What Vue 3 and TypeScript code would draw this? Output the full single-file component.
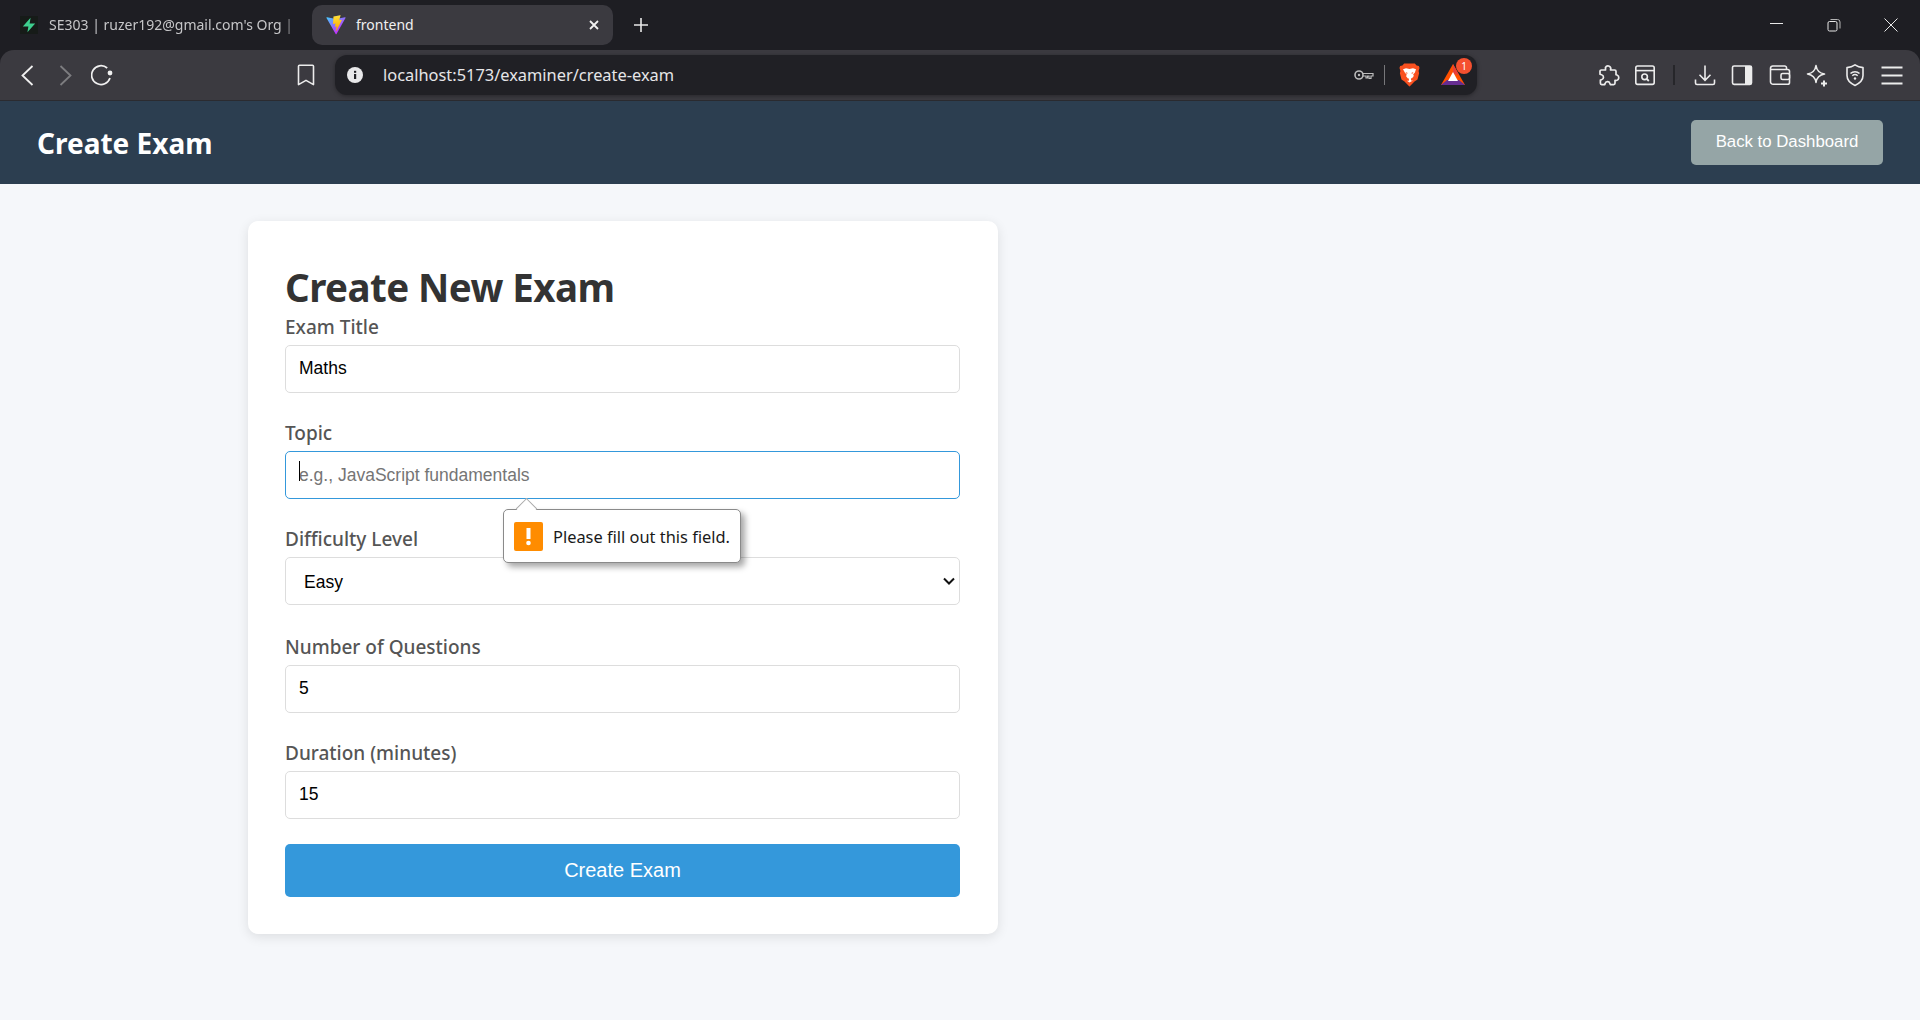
<script setup lang="ts">
import { reactive } from "vue";

const form = reactive({
  title: "Maths",
  topic: "",
  difficulty: "easy",
  questions: 5,
  duration: 15,
});
</script>

<template>
  <div class="browser">
    <div class="chrome">
      <div class="tabstrip">
        <div class="tab">
          <span class="supa-icon">
            <svg viewBox="0 0 18 18" width="18" height="18">
              <path d="M10.6 1.800 2.800 10.500h5.600l-1 5.700 7.800-8.700H9.600z" fill="#3ecf8e" />
            </svg>
          </span>
          <span class="tab-title">SE303 | ruzer192@gmail.com's Org | S</span>
        </div>
        <div class="tab active">
          <svg class="vite-icon" viewBox="0 0 410 404" width="20" height="20">
            <defs>
              <linearGradient id="viteA" x1="6" y1="33" x2="235" y2="344" gradientUnits="userSpaceOnUse">
                <stop offset="0" stop-color="#41d1ff" />
                <stop offset="1" stop-color="#bd34fe" />
              </linearGradient>
              <linearGradient id="viteB" x1="194" y1="8" x2="236" y2="292" gradientUnits="userSpaceOnUse">
                <stop offset="0" stop-color="#ffea83" />
                <stop offset=".08" stop-color="#ffdd35" />
                <stop offset="1" stop-color="#ffa800" />
              </linearGradient>
            </defs>
            <path fill="url(#viteA)" d="M399.641 59.5246L215.643 388.545C211.844 395.338 202.084 395.378 198.228 388.618L10.5817 59.5563C6.38087 52.1896 12.6802 43.2665 21.0281 44.7586L205.223 77.6824C206.398 77.8924 207.601 77.8904 208.776 77.6763L389.119 44.8058C397.439 43.2894 403.768 52.1434 399.641 59.5246Z" />
            <path fill="url(#viteB)" d="M292.965 1.5744L156.801 28.2552C154.563 28.6937 152.906 30.5903 152.771 32.8664L144.395 174.33C144.198 177.662 147.258 180.248 150.51 179.498L188.42 170.749C191.967 169.931 195.172 173.055 194.443 176.622L183.18 231.775C182.422 235.487 185.907 238.661 189.532 237.56L212.947 230.446C216.577 229.344 220.065 232.527 219.297 236.242L201.398 322.875C200.278 328.294 207.486 331.249 210.492 326.603L212.5 323.5L323.454 102.072C325.312 98.3645 322.108 94.137 318.036 94.9228L279.014 102.454C275.347 103.161 272.227 99.746 273.262 96.1583L298.731 7.86689C299.767 4.27314 296.636 0.855181 292.965 1.5744Z" />
          </svg>
          <span class="tab-name">frontend</span>
          <svg class="tab-close" viewBox="0 0 12 12" width="12" height="12">
            <path d="M2 2l8 8M10 2l-8 8" stroke="#f2f2f2" stroke-width="1.8" fill="none" />
          </svg>
        </div>
        <svg class="new-tab" viewBox="0 0 14 14" width="14" height="14">
          <path d="M7 0v14M0 7h14" stroke="#e8e8e8" stroke-width="1.6" fill="none" />
        </svg>
        <div class="win-controls">
          <svg viewBox="0 0 14 14" width="14" height="14"><path d="M0 5.500h13" stroke="#e8e8e8" fill="none" /></svg>
          <svg viewBox="0 0 14 14" width="14" height="14">
            <rect x="1" y="3.500" width="9" height="9.500" rx="1.500" stroke="#e8e8e8" fill="none" />
            <path d="M3.500 1.500h7a2.500 2.500 0 0 1 2.500 2.500v6.500" stroke="#b5b5b5" fill="none" />
          </svg>
          <svg viewBox="0 0 14 14" width="14" height="14"><path d="M.5.5l13 13M13.500.5l-13 13" stroke="#e8e8e8" fill="none" /></svg>
        </div>
      </div>

      <div class="toolbar">
        <div class="nav-btns">
          <svg viewBox="0 0 24 24" width="24" height="24"><path d="M17.500 3 7.500 12.500l10 9.500" stroke="#f0f0f0" stroke-width="1.800" fill="none" /></svg>
          <svg viewBox="0 0 24 24" width="24" height="24"><path d="M7.500 3l10 9.500-10 9.500" stroke="#7d7d80" stroke-width="1.800" fill="none" /></svg>
          <svg viewBox="0 0 24 24" width="24" height="24">
            <path d="M16.200 5A9.400 9.400 0 1 0 19 15" stroke="#f0f0f0" stroke-width="1.700" fill="none" />
            <circle cx="19" cy="10" r="2.400" fill="#f0f0f0" />
          </svg>
        </div>
        <svg class="bookmark" viewBox="0 0 24 24" width="24" height="24">
          <path d="M5.500 2.200h13a1 1 0 0 1 1 1v18.400l-7.500-4.200-7.500 4.200V3.200a1 1 0 0 1 1-1z" stroke="#ececec" stroke-width="1.600" fill="none" stroke-linejoin="round" />
        </svg>
        <div class="urlbar">
          <svg class="info" viewBox="0 0 16 16" width="16" height="16">
            <circle cx="8" cy="8" r="8" fill="#e8e8ea" />
            <rect x="7" y="7" width="2.200" height="5" fill="#202025" />
            <rect x="7" y="3.800" width="2.200" height="2" fill="#202025" />
          </svg>
          <span class="url">localhost:5173/examiner/create-exam</span>
          <svg class="key" viewBox="0 0 20 12" width="20" height="12">
            <circle cx="5" cy="6" r="4" stroke="#bcbcbc" stroke-width="1.600" fill="none" />
            <circle cx="5" cy="6" r="1.200" fill="#bcbcbc" />
            <path d="M9 4.500h10v2.500h-2v2.500h-2V7h-1.500v2H12V7H9" stroke="#bcbcbc" stroke-width="1.200" fill="none" />
          </svg>
          <span class="url-sep"></span>
          <svg class="brave" viewBox="0 0 21 24" width="21" height="24">
            <path d="M5.200.5h10.600l1.800 2 2.300.4.6 2-.9 3.200.5 2.200-1.600 6.100-3 2.200-4.900 4.900-.1.1-.1-.1-4.900-4.900-3-2.200L.9 10.300l.5-2.200-.9-3.200.6-2 2.300-.4z" fill="#f9501f" />
            <path d="M4 6.200l3-1 3.500.8 3.500-.8 3 1-1.200 3.500-1.600 1.500.6 1.800-1.800 2.200-1 .1v2.200h2L10.500 19.500 7.900 17.800h2v-2.200l-1-.1-1.800-2.200.6-1.800-1.600-1.500z" fill="#fff" />
            <path d="M6.500 9l2.200.9-.8 1zM14.500 9l-2.200.9.8 1z" fill="#f9501f" />
          </svg>
          <span class="bat">
            <svg viewBox="0 0 24 22" width="24" height="22">
              <path d="M12 0 0 21h24z" fill="#ff5000" />
              <path d="M12 0 18 11l-6-1z" fill="#e8403a" />
              <path d="M0 21h24l-6-5H6z" fill="#662d91" />
              <path d="M12 8l5 9H7z" fill="#fff" />
            </svg>
            <span class="bat-badge">1</span>
          </span>
        </div>
        <div class="tools">
          <svg viewBox="0 0 24 24" width="24" height="24">
            <path d="M9.500 4.500a2.800 2.800 0 0 1 5.300 1.200l-.3 1.300h4.200a1.300 1.300 0 0 1 1.300 1.300v3.400l1 .3a2.900 2.900 0 0 1-.4 5.500l-1.600-.2v3a1.300 1.300 0 0 1-1.300 1.300h-3.400l-.4-1.200a2.500 2.500 0 0 0-4.800.2l-.3 1H5.700a1.300 1.300 0 0 1-1.300-1.300v-3.200l1.200-.4a2.600 2.600 0 0 0 0-5l-1.600-.4V8.300A1.300 1.300 0 0 1 5.300 7h4.200z" stroke="#ececec" stroke-width="1.700" fill="none" stroke-linejoin="round" />
          </svg>
          <svg viewBox="0 0 24 24" width="24" height="24">
            <rect x="2.800" y="3" width="18.400" height="18.400" rx="1.800" stroke="#ececec" stroke-width="1.600" fill="none" />
            <path d="M2.800 7.600h18.400" stroke="#ececec" stroke-width="1.600" />
            <circle cx="11.600" cy="13.800" r="2.800" stroke="#ececec" stroke-width="1.600" fill="none" />
            <path d="M13.800 16l2 2" stroke="#ececec" stroke-width="1.800" />
          </svg>
          <span class="tool-sep"></span>
          <svg viewBox="0 0 24 24" width="24" height="24">
            <path d="M12 2.500v14.500M6.500 11.800l5.500 5.500 5.500-5.500M2.500 16.500v3.500a1.500 1.500 0 0 0 1.500 1.500h16a1.500 1.500 0 0 0 1.500-1.500v-3.500" stroke="#ececec" stroke-width="1.600" fill="none" />
          </svg>
          <svg viewBox="0 0 24 24" width="24" height="24">
            <rect x="2.500" y="3" width="19" height="18.400" rx="1.600" stroke="#ececec" stroke-width="1.600" fill="none" />
            <rect x="15" y="3" width="6.500" height="18.400" fill="#ececec" />
          </svg>
          <svg viewBox="0 0 24 24" width="24" height="24">
            <path d="M18.500 6.500V4.800a1.800 1.800 0 0 0-1.800-1.800H4.800A2.300 2.300 0 0 0 2.500 5.300v13.400a2.600 2.600 0 0 0 2.600 2.600h14.600a1.800 1.800 0 0 0 1.800-1.800V8.300a1.800 1.800 0 0 0-1.800-1.800H3" stroke="#ececec" stroke-width="1.600" fill="none" />
            <rect x="13" y="10.500" width="8.500" height="6" rx="1.600" stroke="#ececec" stroke-width="1.600" fill="#3b3a40" />
          </svg>
          <svg viewBox="0 0 24 24" width="24" height="24">
            <path d="M11 2.500c.7 4.900 3.500 7.700 8.500 8.500-5 .8-7.800 3.600-8.500 8.500-.7-4.900-3.500-7.700-8.500-8.500 5-.8 7.800-3.600 8.500-8.500z" stroke="#ececec" stroke-width="1.600" fill="none" stroke-linejoin="round" />
            <path d="M19 17.500v6M16 20.500h6" stroke="#ececec" stroke-width="2" fill="none" />
          </svg>
          <svg viewBox="0 0 24 24" width="24" height="24">
            <path d="M12 1.800c2.500 1.700 5 2.500 8 2.800v8c0 4.500-3.400 7.800-8 9.800-4.600-2-8-5.300-8-9.800v-8c3-.3 5.500-1.100 8-2.800z" stroke="#ececec" stroke-width="1.600" fill="none" stroke-linejoin="round" />
            <path d="M7.500 10.500a6.500 6.500 0 0 1 9 0M9.300 12.800a4 4 0 0 1 5.400 0" stroke="#ececec" stroke-width="1.500" fill="none" />
            <circle cx="12" cy="15.500" r="1.200" fill="#ececec" />
          </svg>
          <svg viewBox="0 0 24 24" width="24" height="24">
            <path d="M1.500 4.500h21M1.500 12.500h21M1.500 20.500h21" stroke="#ececec" stroke-width="1.800" fill="none" />
          </svg>
        </div>
      </div>
    </div>

    <header class="app-header">
      <h1 class="app-title">Create Exam</h1>
      <button class="back-btn" type="button">Back to Dashboard</button>
    </header>

    <main class="page">
      <section class="card">
        <h2 class="card-title">Create New Exam</h2>
        <form class="exam-form" @submit.prevent>
          <div class="form-group">
            <label for="title">Exam Title</label>
            <input id="title" v-model="form.title" class="filled" type="text" />
          </div>
          <div class="form-group">
            <label for="topic">Topic</label>
            <input id="topic" v-model="form.topic" class="focused" type="text" placeholder="e.g., JavaScript fundamentals" />
            <span class="caret"></span>
            <div class="bubble">
              <span class="bubble-arrow"></span>
              <span class="bubble-icon">
                <svg viewBox="0 0 29 29" width="29" height="29">
                  <rect x="12.500" y="6" width="4" height="11" fill="#fff" />
                  <circle cx="14.500" cy="21" r="2.300" fill="#fff" />
                </svg>
              </span>
              <span class="bubble-text">Please fill out this field.</span>
            </div>
          </div>
          <div class="form-group select-group">
            <label for="difficulty">Difficulty Level</label>
            <div class="select-wrap">
              <select id="difficulty" v-model="form.difficulty">
                <option value="easy">Easy</option>
                <option value="medium">Medium</option>
                <option value="hard">Hard</option>
              </select>
              <svg class="chevron" viewBox="0 0 12 8" width="12" height="8">
                <path d="M1 1.500l5 5 5-5" stroke="#111" stroke-width="2" fill="none" />
              </svg>
            </div>
          </div>
          <div class="form-group">
            <label for="questions">Number of Questions</label>
            <input id="questions" v-model="form.questions" class="filled" type="number" />
          </div>
          <div class="form-group">
            <label for="duration">Duration (minutes)</label>
            <input id="duration" v-model="form.duration" class="filled" type="number" />
          </div>
          <button class="submit-btn" type="submit">Create Exam</button>
        </form>
      </section>
    </main>
  </div>
</template>

<style>
html,
body {
  margin: 0;
  background: #f5f7fa;
}
</style>

<style scoped>
.browser {
  min-height: 1020px;
  display: flex;
  flex-direction: column;
  background: #f5f7fa;
  font-family: "Noto Sans", "Open Sans", sans-serif;
}

/* browser chrome */
.chrome {
  background: #1e1e23;
}

.tabstrip {
  height: 50px;
  box-sizing: border-box;
  display: flex;
  align-items: center;
  padding-left: 20px;
}

.tab {
  display: flex;
  align-items: center;
  width: 275px;
  margin-right: 17px;
  flex: none;
}

.supa-icon {
  width: 18px;
  height: 18px;
  flex: none;
  margin-right: 11px;
  background: #161b18;
  display: flex;
}

.tab-title {
  padding-bottom: 2px;
  white-space: nowrap;
  font-size: 14px;
  color: #c6c6c8;
  mask-image: linear-gradient(to right, #000 236px, transparent 246px);
}

.tab.active {
  width: 301px;
  height: 40px;
  margin-right: 21px;
  box-sizing: border-box;
  padding: 0 13px 0 14px;
  background: #3b3a40;
  border-radius: 10px;
}

.vite-icon {
  flex: none;
  margin-right: 10px;
}

.tab-name {
  padding-bottom: 2px;
  font-size: 14px;
  color: #f0f0f0;
  flex: 1;
}

.new-tab {
  flex: none;
}

.win-controls {
  margin-left: auto;
  display: flex;
  gap: 43px;
  padding-right: 22px;
}

.toolbar {
  height: 51px;
  box-sizing: border-box;
  display: flex;
  align-items: center;
  padding: 0 16px 0 15px;
  background: #3b3a40;
  border-radius: 14px 14px 0 0;
  border-bottom: 1px solid #2b2b30;
}

.nav-btns {
  display: flex;
  gap: 14px;
}

.bookmark {
  margin-left: 179px;
  margin-right: 17px;
}

.urlbar {
  width: 1142px;
  height: 40px;
  flex: none;
  box-sizing: border-box;
  display: flex;
  align-items: center;
  padding: 0 12px 0 12px;
  background: #202025;
  border-radius: 12px;
  box-shadow: 0 1px 4px rgba(0, 0, 0, 0.35);
}

.info {
  margin-right: 20px;
}

.url {
  padding-bottom: 2px;
  font-size: 16.4px;
  color: #e6e6e8;
  flex: 1;
}

.url-sep {
  width: 1px;
  height: 20px;
  margin: 0 14px 0 10px;
  background: #77777a;
}

.bat {
  position: relative;
  display: flex;
  margin-left: 21px;
}

.bat-badge {
  position: absolute;
  top: -6px;
  right: -7px;
  width: 16px;
  height: 16px;
  border-radius: 50%;
  background: #f5502f;
  color: #fff;
  font-size: 10px;
  line-height: 16px;
  text-align: center;
}

.tools {
  display: flex;
  align-items: center;
  gap: 13.5px;
  margin-left: auto;
}

.tool-sep {
  width: 2px;
  height: 20px;
  margin: 0 4px 0 2.5px;
  background: #26262a;
}

/* app */
.app-header {
  height: 83px;
  box-sizing: border-box;
  display: flex;
  align-items: center;
  justify-content: space-between;
  padding: 0 37px;
  background: #2c3e50;
}

.app-title {
  margin: 0;
  font-size: 28px;
  font-weight: 700;
  color: #fff;
}

.back-btn {
  width: 192px;
  height: 45px;
  padding: 0 0 2px;
  border: 0;
  border-radius: 5px;
  background: #95a5a6;
  color: #fff;
  font-family: "Liberation Sans", sans-serif;
  font-size: 16.8px;
}

.page {
  padding: 37px 0 0 248px;
}

.card {
  width: 750px;
  box-sizing: border-box;
  padding: 37px 38px 37px 37px;
  background: #fff;
  border-radius: 10px;
  box-shadow: 0 3px 12px rgba(0, 0, 0, 0.1);
}

.card-title {
  margin: 0;
  height: 54px;
  font-size: 38.5px;
  letter-spacing: -0.55px;
  line-height: 59px;
  font-weight: 700;
  color: #333;
}

.exam-form {
  display: flex;
  flex-direction: column;
}

.form-group {
  position: relative;
  display: flex;
  flex-direction: column;
  gap: 7px;
  margin-bottom: 25px;
}

.select-group {
  margin-bottom: 27px;
}

label {
  height: 26px;
  font-size: 19px;
  line-height: 31px;
  font-weight: 500;
  color: #555;
}

input,
select {
  width: 100%;
  height: 48px;
  box-sizing: border-box;
  padding: 0 13px;
  border: 1px solid #ddd;
  border-radius: 5px;
  background: #fff;
  color: #000;
  font-family: "Liberation Sans", sans-serif;
  font-size: 17.5px;
  outline: none;
}

input.filled {
  padding-bottom: 2px;
}

select {
  display: block;
  padding-top: 2px;
  padding-left: 18px;
  appearance: none;
}

.select-wrap {
  position: relative;
  display: flex;
}

.chevron {
  position: absolute;
  right: 5px;
  top: 20px;
  pointer-events: none;
}

input::placeholder {
  color: #757575;
}

input.focused {
  border-color: #3498db;
}

.caret {
  position: absolute;
  left: 14px;
  top: 43px;
  width: 1px;
  height: 20px;
  background: #000;
}

.bubble {
  position: absolute;
  top: 100%;
  left: 218px;
  z-index: 2;
  margin-top: 10px;
  width: 238px;
  height: 54px;
  box-sizing: border-box;
  display: flex;
  align-items: center;
  padding-left: 10px;
  background: #fff;
  border: 1px solid #8a8a8a;
  border-radius: 5px;
  box-shadow: 4px 4px 6px rgba(0, 0, 0, 0.35);
}

.bubble-arrow {
  position: absolute;
  left: 15px;
  top: -9px;
  width: 15px;
  height: 15px;
  box-sizing: border-box;
  background: #fff;
  border-top: 1px solid #a8a8a8;
  border-left: 1px solid #a8a8a8;
  transform: rotate(45deg);
}

.bubble-icon {
  width: 29px;
  height: 29px;
  flex: none;
  display: flex;
  border-radius: 2px;
  background: #ff8c00;
}

.bubble-text {
  margin-left: 10px;
  font-size: 16.4px;
  white-space: nowrap;
  color: #1a1a1a;
}

.submit-btn {
  height: 53px;
  border: 0;
  border-radius: 5px;
  background: #3498db;
  color: #fff;
  font-family: "Liberation Sans", sans-serif;
  font-size: 20px;
}
</style>
